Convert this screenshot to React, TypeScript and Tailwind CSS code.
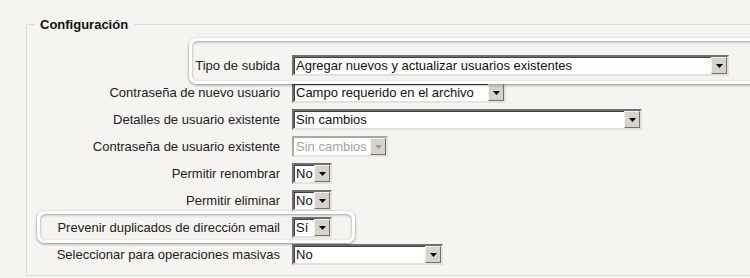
import React from 'react';

type Row = { label: string; value: string; width: string; disabled?: boolean };

const rows: Row[] = [
  { label: 'Tipo de subida', value: 'Agregar nuevos y actualizar usuarios existentes', width: 'w-[437px]' },
  { label: 'Contraseña de nuevo usuario', value: 'Campo requerido en el archivo', width: 'w-[214px]' },
  { label: 'Detalles de usuario existente', value: 'Sin cambios', width: 'w-[350px]' },
  { label: 'Contraseña de usuario existente', value: 'Sin cambios', width: 'w-[96px]', disabled: true },
  { label: 'Permitir renombrar', value: 'No', width: 'w-[40px]' },
  { label: 'Permitir eliminar', value: 'No', width: 'w-[40px]' },
  { label: 'Prevenir duplicados de dirección email', value: 'Sí', width: 'w-[40px]' },
  { label: 'Seleccionar para operaciones masivas', value: 'No', width: 'w-[151px]' },
];

function Arrow({ disabled }: { disabled?: boolean }) {
  return (
    <svg width="7" height="4" viewBox="0 0 7 4">
      <polygon points="0,0 7,0 3.5,4" fill={disabled ? '#9a9a9a' : '#000'} />
    </svg>
  );
}

function FakeSelect({ row }: { row: Row }) {
  const frame = row.disabled
    ? 'border-t-[#a8a8a8] border-l-[#a8a8a8] border-b-[#e4e2dc] border-r-[#e4e2dc] text-[#a3a3a3]'
    : 'border-t-[#6f6f6f] border-l-[#6f6f6f] border-b-[#e4e2dc] border-r-[#e4e2dc] text-[#111] shadow-[inset_1px_1px_0_#404040]';
  return (
    <div className={`flex h-[21px] items-center border-2 bg-white ${frame} ${row.width}`}>
      <span className="flex-1 truncate pl-[2px] leading-[17px]">{row.value}</span>
      <span className="flex h-[17px] w-[16px] shrink-0 items-center justify-center border border-t-[#f4f3ef] border-l-[#f4f3ef] border-b-[#6f6f6f] border-r-[#6f6f6f] bg-[#d6d3cb]">
        <Arrow disabled={row.disabled} />
      </span>
    </div>
  );
}

export default function App() {
  return (
    <div className="relative h-[278px] w-[750px] overflow-hidden bg-[#f5f4f0] font-['Liberation_Sans',Arial,sans-serif] text-[13px]">
      <fieldset className="absolute left-[26px] top-[17px] h-[259px] w-[760px] border border-[#dcdbd6] pb-[5px] pt-[20px]">
        <legend className="ml-[7px] px-[6px] text-[13px] font-bold leading-[15px] text-[#111]">Configuración</legend>
        <div className="grid grid-cols-[253px_1fr] gap-x-3">
          {rows.map((row) => (
            <React.Fragment key={row.label}>
              <div className="flex h-[27px] items-center justify-end text-[#222]">{row.label}</div>
              <div className="flex h-[27px] items-center">
                <FakeSelect row={row} />
              </div>
            </React.Fragment>
          ))}
        </div>
      </fieldset>

      {/* callout highlights */}
      <div className="pointer-events-none absolute left-[189px] top-[38px] h-[46px] w-[580px] rounded-[8px] border-[3px] border-white shadow-[0_1px_3px_rgba(0,0,0,0.45),inset_0_1px_3px_rgba(0,0,0,0.35)]" />
      <div className="pointer-events-none absolute left-[37px] top-[211px] h-[32px] w-[318px] rounded-[8px] border-[3px] border-white shadow-[0_1px_3px_rgba(0,0,0,0.45),inset_0_1px_3px_rgba(0,0,0,0.35)]" />
    </div>
  );
}
